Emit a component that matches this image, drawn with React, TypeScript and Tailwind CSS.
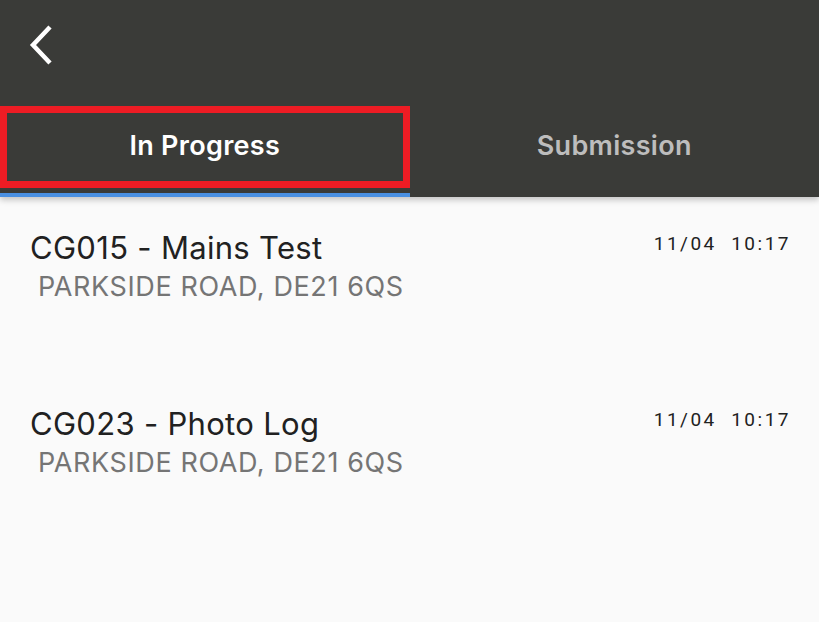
import React, { useState } from "react";

type Job = {
  code: string;
  title: string;
  address: string;
  stamp: string;
};

const jobs: Job[] = [
  { code: "CG015", title: "Mains Test", address: "PARKSIDE ROAD, DE21 6QS", stamp: "11/04  10:17" },
  { code: "CG023", title: "Photo Log", address: "PARKSIDE ROAD, DE21 6QS", stamp: "11/04  10:17" },
];

const tabs = ["In Progress", "Submission"];

const BackIcon = () => (
  <svg width="26" height="40" viewBox="0 0 26 40" fill="none">
    <path d="M22 2 L5 20 L22 38" stroke="white" strokeWidth="4.5" strokeLinecap="butt" strokeLinejoin="miter" />
  </svg>
);

export default function App() {
  const [active, setActive] = useState(0);

  return (
    <div className="w-[819px] h-[622px] overflow-hidden bg-[#fafafa] font-['Inter',sans-serif]">
      <header className="relative z-10 bg-[#3a3b38] shadow-[0_3px_6px_rgba(0,0,0,0.22)]">
        <div className="h-[106px] pl-[28px] pt-[25px]">
          <button type="button" aria-label="back" className="block">
            <BackIcon />
          </button>
        </div>
        <nav className="flex h-[91px]">
          {tabs.map((label, index) => (
            <button
              type="button"
              key={label}
              onClick={() => setActive(index)}
              className={
                index === active
                  ? "relative flex-1 flex items-center justify-center pb-[6px] border-b-4 border-[#4a90e2] text-[27px] tracking-[0.3px] font-semibold text-white"
                  : "relative flex-1 flex items-center justify-center pb-[6px] border-b-4 border-transparent text-[27px] tracking-[0.3px] font-semibold text-[#bdbdbd]"
              }
            >
              {label}
              {index === 0 && (
                <div className="absolute left-0 top-0 w-[410px] h-[82px] border-[7px] border-[#ed1c24]" />
              )}
            </button>
          ))}
        </nav>
      </header>

      <ul>
        {jobs.map(job => (
          <li key={job.code} className="h-[176px] flex justify-between pl-[30px] pr-[28px] pt-[33px]">
            <div>
              <div className="text-[31px] leading-[36px] tracking-[0.3px] text-[#212121]">
                {job.code} - {job.title}
              </div>
              <div className="pl-[8px] pt-[5px] text-[27px] leading-[32px] tracking-[0.6px] text-[#757575]">
                {job.address}
              </div>
            </div>
            <div className="font-['Roboto',sans-serif] text-[19px] tracking-[2.5px] text-[#212121] whitespace-pre">
              {job.stamp}
            </div>
          </li>
        ))}
      </ul>
    </div>
  );
}
